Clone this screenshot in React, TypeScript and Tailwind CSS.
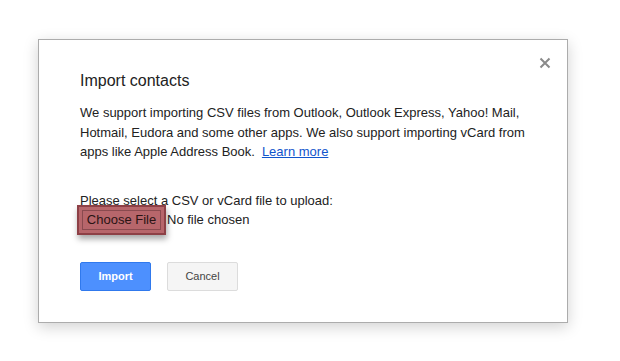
const App = () => {
  return (
    <div className="w-[620px] h-[361px] bg-white pt-[39px] pl-[38px] font-['Liberation_Sans',Arial,sans-serif]">
      <div className="relative w-[530px] h-[284px] bg-white border border-[#acacac] shadow-[0_4px_14px_rgba(0,0,0,0.18)] pl-[41px] pt-[31px]">
        <svg
          className="absolute right-[16px] top-[17px]"
          width="12"
          height="12"
          viewBox="0 0 12 12"
        >
          <path d="M1.5 1.5 L10.5 10.5 M10.5 1.5 L1.5 10.5" stroke="#8a8a8a" strokeWidth="2" />
        </svg>
        <h1 className="text-[16px] leading-[20px] text-[#222]">Import contacts</h1>
        <p className="mt-[12px] w-[445px] text-[13px] leading-[19.5px] text-[#222]">
          We support importing CSV files from Outlook, Outlook Express, Yahoo! Mail, Hotmail, Eudora and some other apps. We also support importing vCard from apps like Apple Address Book.
          <span className="ml-[7px] text-[#15c] underline">Learn more</span>
        </p>
        <p className="mt-[31px] text-[13px] leading-[16px] text-[#222]">
          Please select a CSV or vCard file to upload:
        </p>
        <div className="flex items-center text-[13px] text-[#222]">
          <div className="relative -ml-[3px] mt-[-4px]">
            <div className="w-[89px] h-[30px] bg-[#b7666b] border-[2px] border-[#8d4046] shadow-[1px_4px_6px_rgba(0,0,0,0.35)] flex items-center justify-center">
              <div className="w-[79px] h-[20px] border border-[#8a4a4f] flex items-center justify-center text-[#2a1414]">
                Choose File
              </div>
            </div>
          </div>
          <span className="ml-[1px] -mt-[4px]">No file chosen</span>
        </div>
        <div className="mt-[27px] flex gap-[16px] text-[11px]">
          <div className="w-[71px] h-[29px] rounded-[2px] bg-[#4d90fe] border border-[#3079ed] text-white font-bold flex items-center justify-center">
            Import
          </div>
          <div className="w-[71px] h-[29px] rounded-[2px] bg-[#f5f5f5] border border-[#dcdcdc] text-[#444] flex items-center justify-center">
            Cancel
          </div>
        </div>
      </div>
    </div>
  );
};

export default App;
